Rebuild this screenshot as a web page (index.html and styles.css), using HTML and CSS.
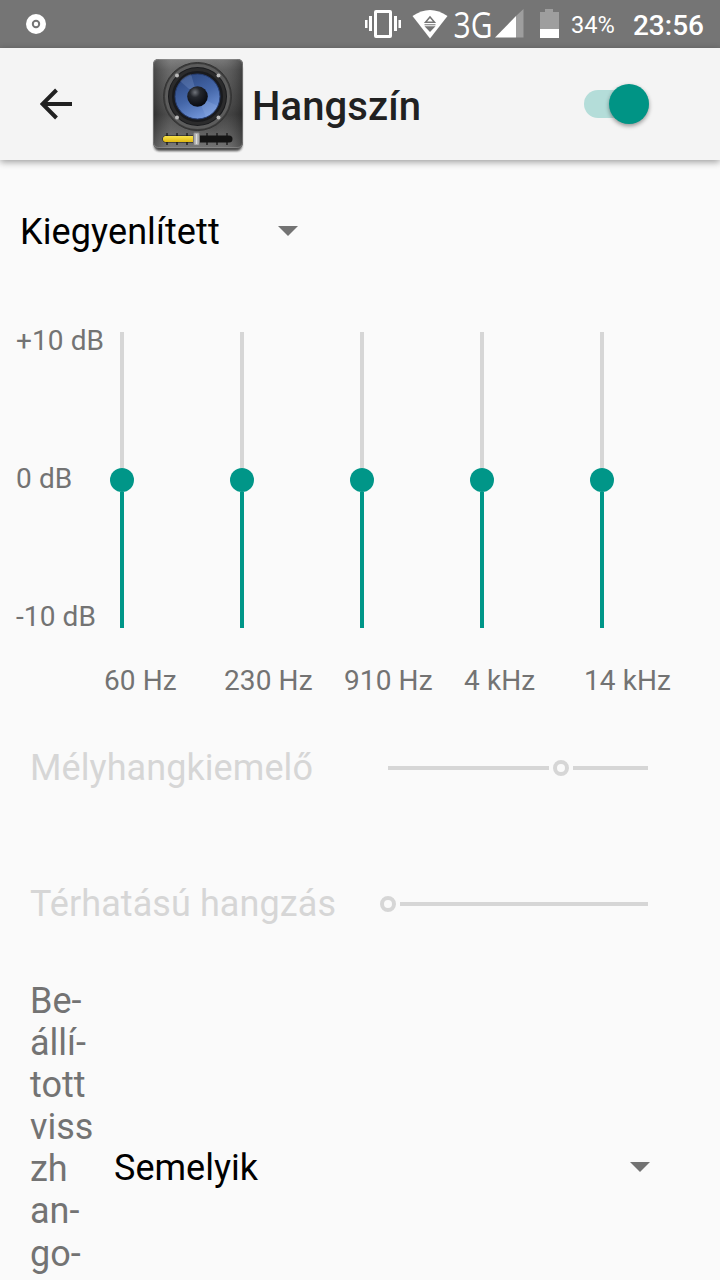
FILE: index.html
```html
<!DOCTYPE html>
<html lang="hu">
<head>
  <meta charset="UTF-8" />
  <meta name="viewport" content="width=device-width, initial-scale=1.0" />
  <title>Hangszín</title>
  <link rel="stylesheet" href="styles.css">
</head>
<body>
  <div class="statusbar">
    <svg class="disc" width="20" height="20" viewBox="0 0 20 20">
      <circle cx="10" cy="10" r="10" fill="#fff"/>
      <circle cx="10" cy="10" r="3.2" fill="none" stroke="#757575" stroke-width="2"/>
    </svg>
    <svg class="tray" width="196" height="48" viewBox="0 0 196 48">
      <!-- vibrate -->
      <g fill="#fff">
        <path d="M1 20h2.5v8H1zM5 16h3v15H5zM30 16h3v15h-3zM34.500 20h2.500v8h-2.500z"/>
        <path fill-rule="evenodd" d="M12 10h14q2 0 2 2v24q0 2-2 2H12q-2 0-2-2V12q0-2 2-2zM13 13v22h12V13z"/>
        <!-- wifi -->
        <path d="M48.500 16Q66 4 83.500 16L66 38.500z"/>
        <!-- signal -->
        <path d="M131 37.500L152 16v21.500z"/>
        <path d="M152 16l7.500-7v28.500H152z" opacity=".3"/>
        <!-- battery -->
        <path d="M176 12h5V9h8v3h6v17h-19z" opacity=".3"/>
        <path d="M176 29h19v9h-19z"/>
      </g>
      <path d="M61.500 22.300h9L66 17z" fill="none" stroke="#757575" stroke-width="1.500"/>
      <path d="M60.500 24.200h11v1h-11zM60.500 26.200h11L66 32z" fill="#757575"/>
      <text class="network" x="89.500" y="37.500" textLength="39" lengthAdjust="spacingAndGlyphs">3G</text>
    </svg>
    <span class="percent">34%</span>
    <span class="clock">23:56</span>
  </div>

  <div class="toolbar">
    <svg class="back" width="32" height="32" viewBox="0 0 32 32">
      <path d="M32 16H3M16.500 2L2.500 16l14 14" fill="none" stroke="#212121" stroke-width="4"/>
    </svg>
    <svg class="logo" width="94" height="98" viewBox="0 0 94 98">
      <defs>
        <linearGradient id="box" x1="0" y1="0" x2="0" y2="1">
          <stop offset="0" stop-color="#777"/>
          <stop offset=".12" stop-color="#5c5c5c"/>
          <stop offset=".5" stop-color="#464646"/>
          <stop offset=".62" stop-color="#3a3a3a"/>
          <stop offset="1" stop-color="#707070"/>
        </linearGradient>
        <linearGradient id="side">
          <stop offset="0" stop-color="#111" stop-opacity=".3"/>
          <stop offset=".2" stop-color="#aaa" stop-opacity=".2"/>
          <stop offset=".7" stop-color="#aaa" stop-opacity=".05"/>
          <stop offset="1" stop-color="#111" stop-opacity=".4"/>
        </linearGradient>
        <linearGradient id="cone" x1=".2" y1="0" x2=".7" y2="1">
          <stop offset="0" stop-color="#2c477f"/>
          <stop offset=".5" stop-color="#4466a8"/>
          <stop offset="1" stop-color="#789ce0"/>
        </linearGradient>
        <radialGradient id="cap" cx=".38" cy=".3" r=".7">
          <stop offset="0" stop-color="#70747b"/>
          <stop offset=".35" stop-color="#25282e"/>
          <stop offset="1" stop-color="#080a10"/>
        </radialGradient>
        <linearGradient id="gold" x1="0" y1="0" x2="0" y2="1">
          <stop offset="0" stop-color="#f9e34c"/>
          <stop offset="1" stop-color="#dfb812"/>
        </linearGradient>
        <filter id="soft"><feGaussianBlur stdDeviation="1"/></filter>
      </defs>
      <rect x="3" y="7" width="88" height="87" rx="5" fill="#222" opacity=".8" filter="url(#soft)"/>
      <rect x="2" y="2" width="90" height="89" rx="5" fill="url(#box)"/>
      <rect x="2" y="2" width="90" height="89" rx="5" fill="url(#side)"/>
      <rect x="2.500" y="2.500" width="89" height="88" rx="5" fill="none" stroke="#999" stroke-opacity=".5"/>
      <circle cx="46.500" cy="39.500" r="34" fill="#3c3c3c" stroke="#333"/>
      <circle cx="46.500" cy="39.500" r="31" fill="#191a1d" stroke="#5c5c5c" stroke-width="3"/>
      <circle cx="46.500" cy="39.500" r="27" fill="none" stroke="#2b2b2c" stroke-width="3"/>
      <circle cx="46.500" cy="39.500" r="22.500" fill="url(#cone)" stroke="#263d71"/>
      <path d="M46.500 39.500L67 49Q63 57 55 60zM46.500 39.500L29 24Q34 18 40 17z" fill="#a5bced" opacity=".2"/>
      <circle cx="46.500" cy="39.500" r="10.300" fill="url(#cap)"/>
      <g fill="#bbb">
        <circle cx="26" cy="18.500" r="2"/>
        <circle cx="67.500" cy="18.500" r="2"/>
        <circle cx="26" cy="60.500" r="2"/>
        <circle cx="67.500" cy="60.500" r="2"/>
      </g>
      <path d="M16 76v12M26 76v12M36 76v12M56 76v12M66 76v12M76 76v12" stroke="#222" stroke-width="1.500"/>
      <rect x="11.500" y="78.500" width="70" height="7" rx="3.500" fill="#141414"/>
      <rect x="12" y="79" width="34" height="6" rx="2.500" fill="url(#gold)"/>
      <rect x="42.500" y="75.500" width="6" height="13" rx="1.500" fill="#aaa" stroke="#777"/>
      <path d="M45.500 77v10" stroke="#ddd" stroke-width="1.500"/>
    </svg>
    <h1>Hangszín</h1>
    <div class="switch"><div class="knob"></div></div>
  </div>

  <div class="content">
    <div class="select preset">
      <span>Kiegyenlített</span>
      <i class="arrow"></i>
    </div>

    <div class="equalizer">
      <div class="levels">
        <span>+10 dB</span>
        <span>0 dB</span>
        <span>-10 dB</span>
      </div>
      <div class="band"><div class="track"></div><i class="thumb"></i><div class="track filled"></div></div>
      <div class="band"><div class="track"></div><i class="thumb"></i><div class="track filled"></div></div>
      <div class="band"><div class="track"></div><i class="thumb"></i><div class="track filled"></div></div>
      <div class="band"><div class="track"></div><i class="thumb"></i><div class="track filled"></div></div>
      <div class="band"><div class="track"></div><i class="thumb"></i><div class="track filled"></div></div>
    </div>
    <div class="frequencies">
      <span>60 Hz</span>
      <span>230 Hz</span>
      <span>910 Hz</span>
      <span>4 kHz</span>
      <span>14 kHz</span>
    </div>

    <div class="effect">
      <span>Mélyhangkiemelő</span>
      <div class="slider bass"><b></b><i></i><b></b></div>
    </div>
    <div class="effect">
      <span>Térhatású hangzás</span>
      <div class="slider surround"><i></i><b></b></div>
    </div>

    <div class="reverb">
      <div class="reverb-label">Be-<br>állí-<br>tott<br>viss<br>zh<br>an-<br>go-</div>
      <div class="select reverb-value">
        <span>Semelyik</span>
        <i class="arrow"></i>
      </div>
    </div>
  </div>
</body>
</html>
```

FILE: styles.css
```css
* {
  box-sizing: border-box;
}
body {
  margin: 0;
  height: 1280px;
  overflow: hidden;
  display: flex;
  flex-direction: column;
  font-family: Roboto, sans-serif;
  background: #fafafa;
  color: #737373;
}
svg {
  display: block;
  flex: none;
}
.statusbar {
  flex: none;
  height: 48px;
  display: flex;
  align-items: center;
  padding: 0 16px 0 26px;
  background: #757575;
  color: #fff;
}
.tray {
  margin-left: auto;
  margin-right: 11px;
}
.network {
  font-family: "Open Sans", sans-serif;
  font-size: 36px;
  fill: #fff;
}
.percent {
  width: 62px;
  font-size: 23.6px;
  padding-top: 2px;
}
.clock {
  font-size: 28px;
  font-weight: 500;
  padding-top: 2px;
}
.toolbar {
  flex: none;
  height: 112px;
  display: flex;
  align-items: center;
  padding: 0 71px 0 40px;
  background: #f4f4f4;
  box-shadow: 0 2px 7px rgba(0,0,0,0.38);
}
.logo {
  margin: 4px 7px 0 79px;
}
h1 {
  margin: 6px 0 0;
  font-size: 40px;
  font-weight: 500;
  line-height: 48px;
  letter-spacing: 0.1px;
  color: #212121;
}
.switch {
  width: 65px;
  height: 28px;
  margin-left: auto;
  display: flex;
  align-items: center;
  justify-content: flex-end;
  border-radius: 14px;
  background: #b4ddd9;
}
.knob {
  width: 40px;
  height: 40px;
  border-radius: 50%;
  background: #009485;
  box-shadow: 0 2px 4px rgba(0,0,0,0.4);
}
.content {
  flex: 1;
  min-height: 0;
  padding-top: 50px;
}
.select {
  display: flex;
  align-items: center;
  justify-content: space-between;
  font-size: 36px;
  line-height: 42px;
  color: #000;
}
.arrow {
  border: 10px solid transparent;
  border-top-color: #737373;
  border-bottom: 0;
}
.preset {
  width: 278px;
  height: 42px;
  margin-left: 20px;
  letter-spacing: 0.1px;
}
.preset span {
  padding-top: 2px;
}
.equalizer {
  height: 310px;
  margin-top: 72px;
  display: flex;
  font-size: 28px;
  line-height: 33px;
  letter-spacing: 0.1px;
}
.levels {
  width: 46px;
  height: 309px;
  margin-left: 16px;
  display: flex;
  flex-direction: column;
  justify-content: space-between;
  white-space: nowrap;
}
.band {
  width: 120px;
  height: 296px;
  margin-top: 8px;
  display: flex;
  flex-direction: column;
  align-items: center;
}
.track {
  flex: 1;
  width: 4px;
  background: #d6d6d6;
}
.filled {
  background: #009688;
}
.thumb {
  width: 24px;
  height: 24px;
  border-radius: 50%;
  background: #009688;
}
.frequencies {
  display: grid;
  grid-template-columns: repeat(5, 120px);
  margin: 30px 0 0 104px;
  font-size: 28px;
  line-height: 33px;
  letter-spacing: 0.1px;
}
.effect {
  height: 42px;
  margin: 50px 72px 94px 30px;
  display: flex;
  align-items: center;
  justify-content: space-between;
  font-size: 36px;
  letter-spacing: 0.08px;
  color: #d6d6d6;
}
.slider {
  display: flex;
  align-items: center;
  gap: 4px;
}
.slider b {
  flex: 1;
  height: 4px;
  background: #d6d6d6;
}
.slider i {
  width: 16px;
  height: 16px;
  border: 4px solid #d6d6d6;
  border-radius: 50%;
}
.bass {
  width: 260px;
}
.bass b:first-child {
  flex: none;
  width: 161px;
}
.surround {
  width: 268px;
}
.effect + .effect {
  margin-bottom: 55px;
}
.reverb {
  display: flex;
  padding-left: 30px;
  font-size: 36px;
  line-height: 42.1px;
}
.reverb-label {
  width: 84px;
}
.reverb-value {
  width: 536px;
  height: 42px;
  margin-top: 166px;
}
.reverb-value span {
  padding-top: 2px;
}
```
